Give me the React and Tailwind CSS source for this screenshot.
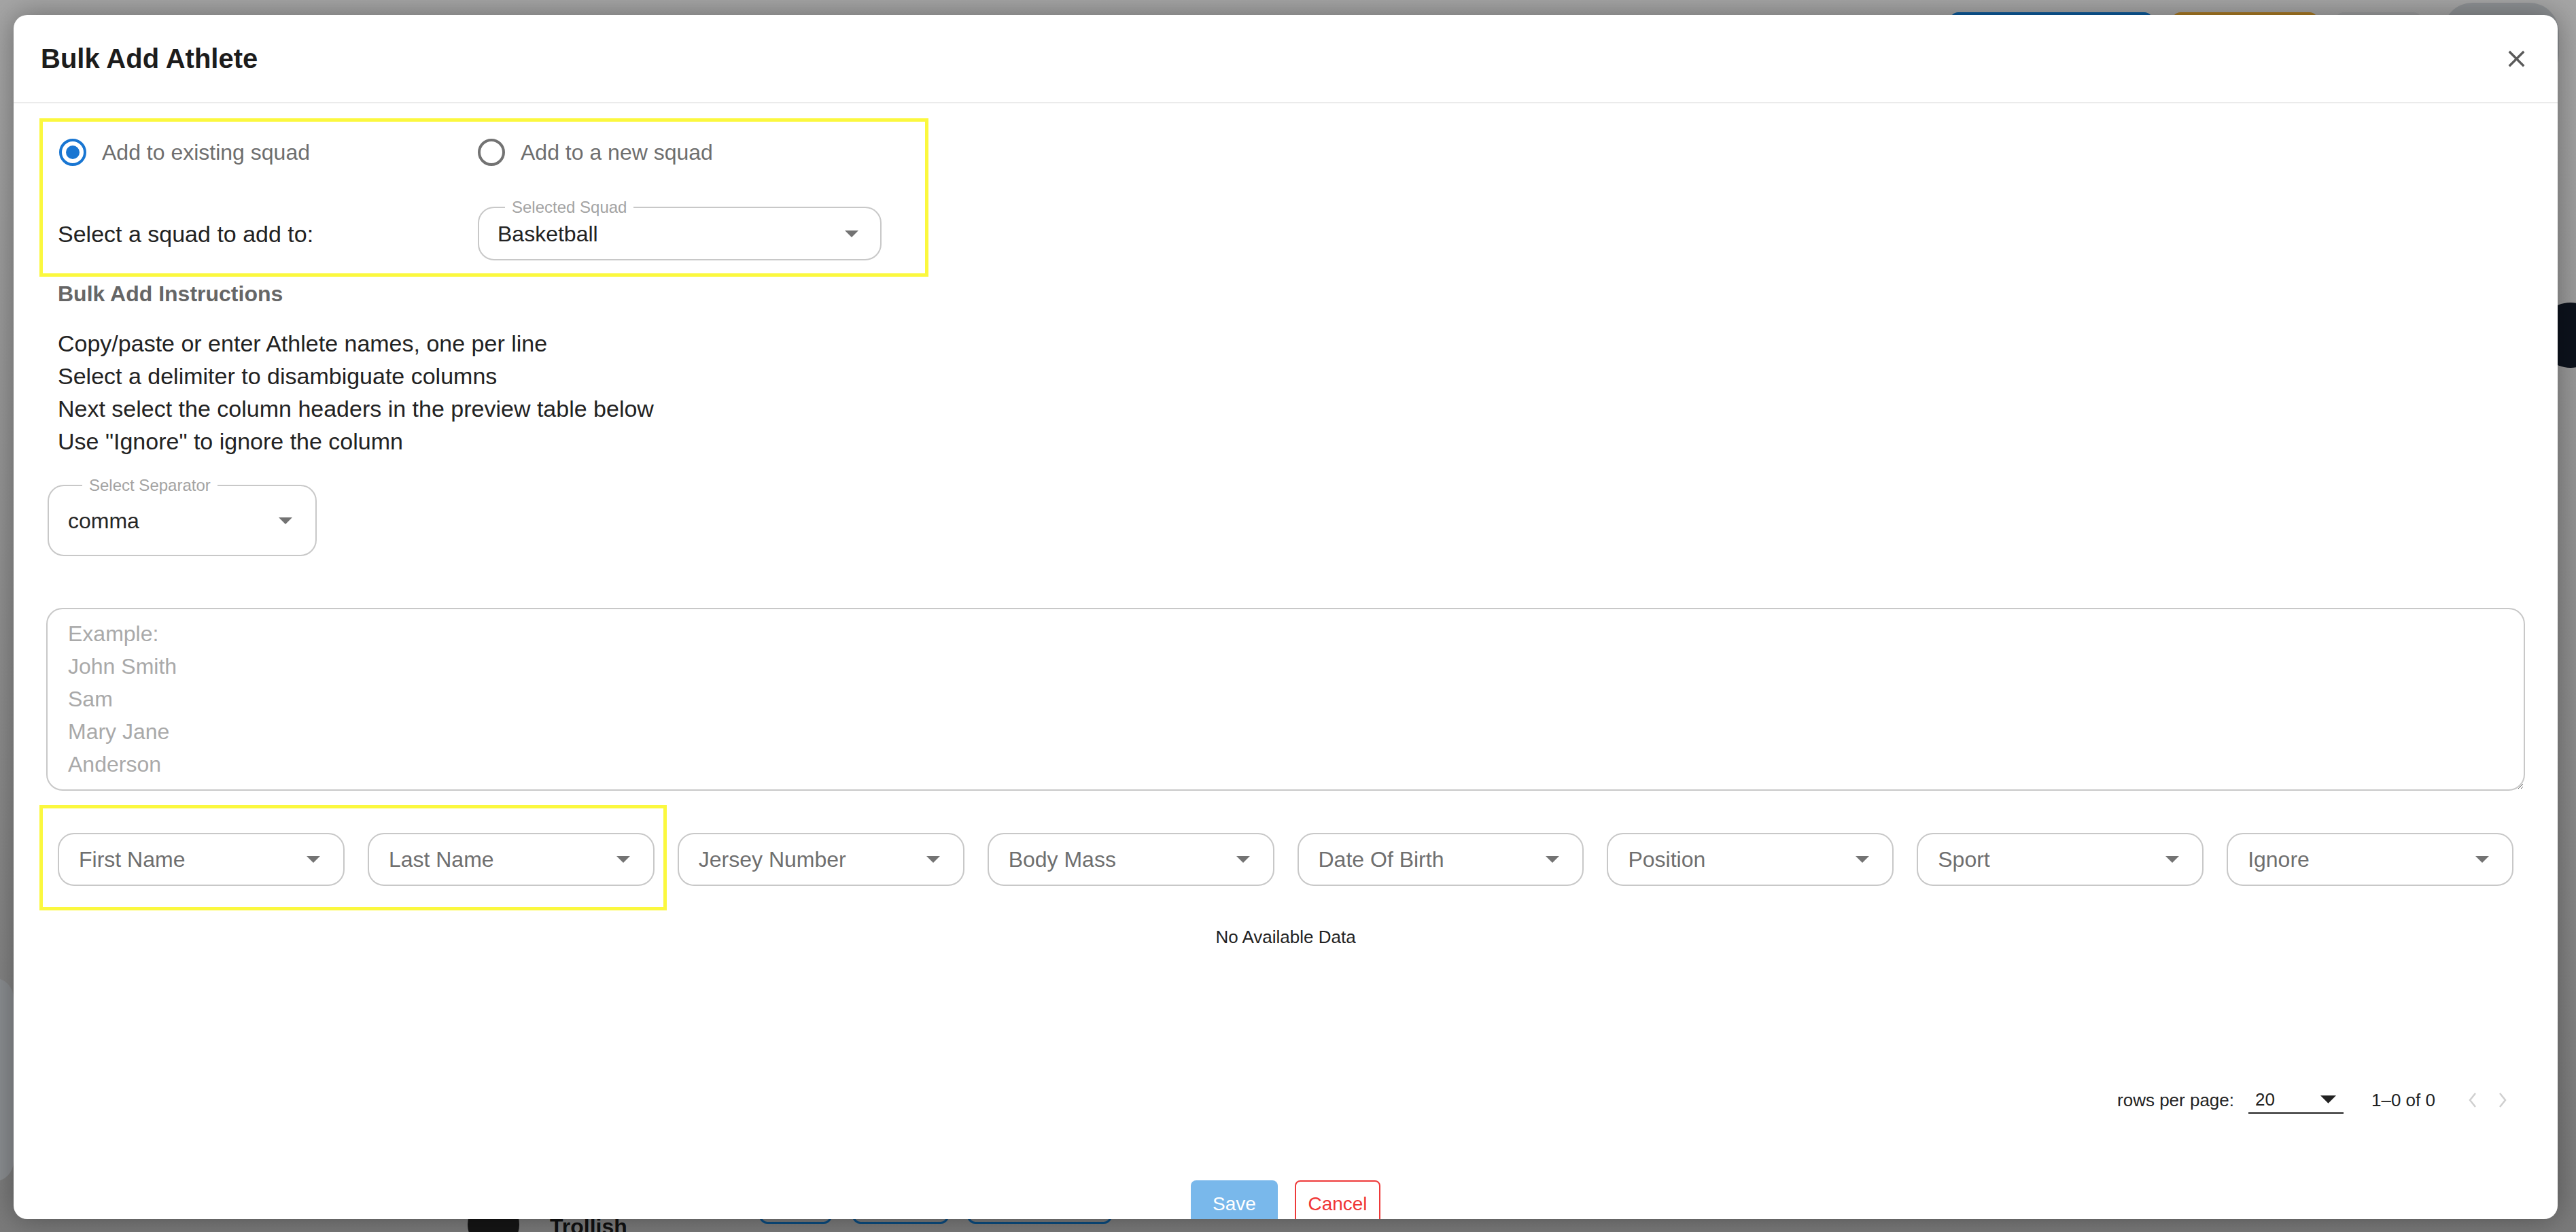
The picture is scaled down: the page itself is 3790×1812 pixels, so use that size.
import React, { useState } from "react";

const COLUMNS = [
  "First Name",
  "Last Name",
  "Jersey Number",
  "Body Mass",
  "Date Of Birth",
  "Position",
  "Sport",
  "Ignore",
];

const INSTRUCTIONS = [
  "Copy/paste or enter Athlete names, one per line",
  "Select a delimiter to disambiguate columns",
  "Next select the column headers in the preview table below",
  'Use "Ignore" to ignore the column',
];

const DropArrow = ({ className = "" }) => (
  <svg viewBox="0 0 20 10" className={className}>
    <path d="M0 0l10 10 10-10z" fill="currentColor" />
  </svg>
);

const Radio = ({ checked, label, onClick }) => (
  <button type="button" onClick={onClick} className="flex h-[40px] items-center">
    <span
      className={`ml-[2px] flex h-[40px] w-[40px] items-center justify-center rounded-full border-[4px] ${
        checked ? "border-[#1976d2]" : "border-[#737373]"
      }`}
    >
      {checked && <span className="h-[20px] w-[20px] rounded-full bg-[#1976d2]" />}
    </span>
    <span className="ml-[23px] text-[32px] leading-[40px] text-[#6e6e6e]">{label}</span>
  </button>
);

// outlined select with the label sitting in the border notch
const OutlinedSelect = ({ label, value, boxClass, labelClass, textClass }) => (
  <div
    className={`relative flex items-center justify-between rounded-[24px] border-2 border-[#c8c8c8] ${boxClass}`}
  >
    {label && (
      <span
        className={`absolute top-[-17px] bg-white px-[10px] text-[24px] leading-[32px] text-[#a3a3a3] ${labelClass}`}
      >
        {label}
      </span>
    )}
    <span className={`text-[32px] leading-[48px] ${textClass}`}>{value}</span>
    <DropArrow className="h-[10px] w-[20px] text-[#737373]" />
  </div>
);

const App = () => {
  const [mode, setMode] = useState("existing");

  return (
    <div className="relative h-[1812px] w-[3790px] overflow-hidden bg-gradient-to-b from-[#a5a5a5] to-[#7a7a7a] font-['Liberation_Sans',Arial,sans-serif]">
      {/* page behind the dialog */}
      <div className="flex h-full flex-col">
        <div className="flex h-[124px] items-start justify-end pr-[25px]">
          <div className="mt-[18px] h-[60px] w-[298px] rounded-[12px] bg-[#0b5a9a]" />
          <div className="ml-[29px] mt-[18px] h-[60px] w-[214px] rounded-[12px] bg-[#a97a23]" />
          <div className="ml-[26px] mt-[18px] h-[60px] w-[127px] rounded-[12px] bg-[#9b9c9d]" />
          <div className="ml-[31px] mt-[4px] h-[120px] w-[171px] rounded-[44px] bg-[#8d9093]" />
        </div>
        <div className="flex flex-1 justify-between">
          <div className="-mb-[6px] -ml-[60px] h-[300px] w-[80px] self-end rounded-[30px] bg-[#8a8d90]" />
          <div className="-mr-[40px] mt-[321px] h-[96px] w-[96px] rounded-full bg-[#0c121c]" />
        </div>
        <div className="flex h-[80px] items-start">
          <div className="ml-[688px] mt-[31px] h-[76px] w-[76px] shrink-0 rounded-full bg-[#151515]" />
          <span className="ml-[45px] mt-[52px] w-[308px] shrink-0 text-[32px] font-bold leading-[40px] text-[#111]">
            Trollish
          </span>
          <div className="mt-[8px] h-[60px] w-[107px] shrink-0 rounded-[12px] border-[3px] border-[#0b4c80]" />
          <div className="ml-[30px] mt-[8px] h-[60px] w-[142px] shrink-0 rounded-[12px] border-[3px] border-[#0b4c80]" />
          <div className="ml-[27px] mt-[8px] h-[60px] w-[213px] shrink-0 rounded-[12px] border-[3px] border-[#0b4c80]" />
        </div>
      </div>

      {/* dialog */}
      <div className="absolute inset-0 pb-[19px] pl-[20px] pr-[27px] pt-[22px]">
        <div className="flex h-full flex-col overflow-hidden rounded-[20px] bg-white shadow-[0_0_40px_rgba(0,0,0,0.35)]">
          <div className="flex h-[130px] shrink-0 items-center justify-between border-b-2 border-[#ebebeb] px-[40px]">
            <h2 className="text-[40px] font-bold leading-[48px] text-[#1c1c1c]">Bulk Add Athlete</h2>
            <svg viewBox="0 0 24 24" className="h-[41px] w-[41px] text-[#5a5a5a]">
              <path
                fill="currentColor"
                d="M19 6.41 17.59 5 12 10.59 6.41 5 5 6.41 10.59 12 5 17.59 6.41 19 12 13.41 17.59 19 19 17.59 13.41 12z"
              />
            </svg>
          </div>

          <div className="flex flex-col px-[48px] pt-[22px]">
            {/* squad choice */}
            <div className="-ml-[10px] w-[1308px] border-[5px] border-[#fbf83e] pb-[19px] pl-[22px] pt-[25px]">
              <div className="grid grid-cols-[618px_1fr] items-center">
                <Radio
                  checked={mode === "existing"}
                  label="Add to existing squad"
                  onClick={() => setMode("existing")}
                />
                <div className="-ml-[2px]">
                  <Radio
                    checked={mode === "new"}
                    label="Add to a new squad"
                    onClick={() => setMode("new")}
                  />
                </div>
              </div>
              <div className="mt-[60px] grid grid-cols-[618px_1fr] items-center">
                <span className="text-[34px] leading-[48px] text-[#222]">Select a squad to add to:</span>
                <OutlinedSelect
                  label="Selected Squad"
                  value="Basketball"
                  boxClass="h-[79px] w-[594px] pl-[27px] pr-[32px]"
                  labelClass="left-[38px]"
                  textClass="text-[#222]"
                />
              </div>
            </div>

            <h3 className="mt-[1px] pl-[17px] text-[32px] font-bold leading-[48px] text-[#666]">
              Bulk Add Instructions
            </h3>
            <div className="mt-[25px] pl-[17px]">
              {INSTRUCTIONS.map((line) => (
                <p key={line} className="text-[34px] leading-[48px] text-[#222]">
                  {line}
                </p>
              ))}
            </div>

            <div className="ml-[2px] mt-[40px]">
              <OutlinedSelect
                label="Select Separator"
                value="comma"
                boxClass="h-[105px] w-[396px] pl-[28px] pr-[34px]"
                labelClass="left-[49px]"
                textClass="text-[#262626]"
              />
            </div>

            <textarea
              className="mt-[76px] h-[269px] w-full rounded-[24px] border-2 border-[#c8c8c8] px-[30px] pt-[12px] text-[32px] leading-[48px] text-[#222] outline-none placeholder:text-[#a9a9a9]"
              placeholder={"Example:\nJohn Smith\nSam\nMary Jane\nAnderson"}
            />

            {/* column headers for the preview table */}
            <div className="relative mt-[62px] grid grid-cols-8 gap-x-[34px] px-[17px]">
              <div className="pointer-events-none absolute left-[-10px] top-[-41px] h-[155px] w-[923px] border-[5px] border-[#fbf83e]" />
              {COLUMNS.map((col) => (
                <OutlinedSelect
                  key={col}
                  value={col}
                  boxClass="h-[78px] pl-[29px] pr-[34px]"
                  textClass="text-[#6f6f6f]"
                />
              ))}
            </div>

            <p className="mt-[57px] text-center text-[26px] leading-[36px] text-[#222]">No Available Data</p>

            <div className="mt-[198px] flex h-[48px] items-center justify-end pr-[27px] text-[26px] text-[#222]">
              <span>rows per page:</span>
              <div className="ml-[21px] flex h-[40px] w-[140px] items-center justify-between border-b-2 border-[#222] pl-[10px] pr-[11px]">
                <span>20</span>
                <DropArrow className="h-[12px] w-[23px] text-[#222]" />
              </div>
              <span className="ml-[41px]">1–0 of 0</span>
              <div className="ml-[49px] flex items-center gap-[32px] text-[#cfcfcf]">
                <svg viewBox="0 0 12 22" className="h-[22px] w-[12px]">
                  <polyline points="10,1 2,11 10,21" fill="none" stroke="currentColor" strokeWidth="2.5" />
                </svg>
                <svg viewBox="0 0 12 22" className="h-[22px] w-[12px]">
                  <polyline points="2,1 10,11 2,21" fill="none" stroke="currentColor" strokeWidth="2.5" />
                </svg>
              </div>
            </div>

            <div className="mt-[94px] flex justify-center gap-[25px]">
              <button type="button" className="h-[70px] w-[128px] rounded-[8px] bg-[#79b8eb] text-[28px] text-white">
                Save
              </button>
              <button
                type="button"
                className="h-[70px] w-[126px] rounded-[8px] border-2 border-[#ee3a3a] text-[28px] text-[#f03535]"
              >
                Cancel
              </button>
            </div>
          </div>
        </div>
      </div>
    </div>
  );
};

export default App;
